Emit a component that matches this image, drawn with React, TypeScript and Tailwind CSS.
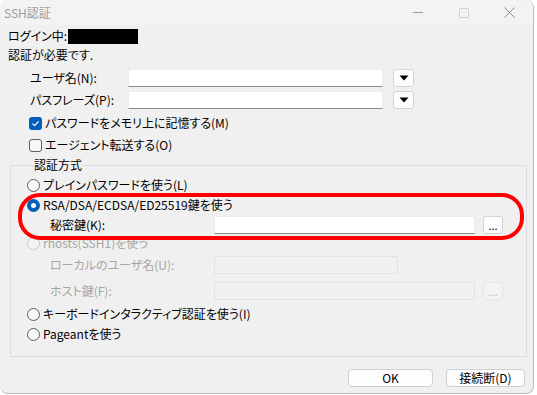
import React from 'react';

const font = "[font-family:'Noto_Sans_CJK_JP','Noto_Sans',sans-serif] [font-feature-settings:'palt']";

function Radio({ checked, disabled }: { checked?: boolean; disabled?: boolean }) {
  if (checked) {
    return (
      <span className="w-[13px] h-[13px] rounded-full bg-[#005fb8] flex items-center justify-center shrink-0">
        <span className="w-[5px] h-[5px] rounded-full bg-white" />
      </span>
    );
  }
  return (
    <span
      className={`w-[13px] h-[13px] rounded-full border shrink-0 ${disabled ? 'border-[#c8c8c8] bg-[#f3f3f3]' : 'border-[#5d5d5d] bg-[#f7f7f7]'}`}
    />
  );
}

function Checkbox({ checked }: { checked?: boolean }) {
  if (checked) {
    return (
      <span className="w-[13px] h-[13px] rounded-[3px] bg-[#005fb8] flex items-center justify-center shrink-0">
        <svg width="9" height="9" viewBox="0 0 9 9">
          <path d="M1.5 4.6 L3.6 6.7 L7.6 2.3" fill="none" stroke="white" strokeWidth="1.2" />
        </svg>
      </span>
    );
  }
  return <span className="w-[13px] h-[13px] rounded-[3px] border border-[#5d5d5d] bg-[#f7f7f7] shrink-0" />;
}

function TextBox({ w, disabled }: { w: string; disabled?: boolean }) {
  return disabled ? (
    <div className={`${w} h-[18px] border border-[#e2e2e2] bg-[#f0f0f0]`} />
  ) : (
    <div className={`${w} h-[18px] bg-white border border-[#ececec] border-b-[#8a8a8a]`} />
  );
}

function DropButton() {
  return (
    <div className="w-[21px] h-[18px] rounded-[3px] border border-[#d3d3d3] bg-[#fdfdfd] flex items-center justify-center">
      <svg width="10" height="6" viewBox="0 0 10 6">
        <path d="M0.5 0.5 H9.5 L5 5.5 Z" fill="black" />
      </svg>
    </div>
  );
}

function DotsButton({ disabled }: { disabled?: boolean }) {
  return (
    <div
      className={`w-[20px] h-[18px] rounded-[3px] border flex items-end justify-center pb-[2px] text-[11px] leading-[11px] ${disabled ? 'border-[#e6e6e6] bg-[#f3f3f3] text-[#b8b8b8]' : 'border-[#d3d3d3] bg-[#fdfdfd] text-black'}`}
    >
      ...
    </div>
  );
}

export default function App() {
  return (
    <div className={`w-[537px] h-[395px] bg-white text-[12px] text-black ${font}`}>
      <div className="relative w-[534px] h-[394px] bg-[#f0f0f0] rounded-[8px] border-r border-b border-[#6b6b6b]/40 overflow-hidden flex flex-col">
        {/* Title bar */}
        <div className="h-[25px] bg-[#f3f3f3] flex items-center shrink-0">
          <span className="pl-[4px] text-[#9b9b9b] text-[12px]">SSH認証</span>
          <div className="ml-auto flex items-center h-full">
            <div className="w-[46px] flex justify-center">
              <span className="w-[10px] h-px bg-[#9b9b9b]" />
            </div>
            <div className="w-[46px] flex justify-center">
              <span className="w-[10px] h-[10px] border border-[#d0d0d0] rounded-[2px]" />
            </div>
            <div className="w-[46px] flex justify-center pr-[2px]">
              <svg width="11" height="11" viewBox="0 0 11 11">
                <path d="M0.5 0.5 L10.5 10.5 M10.5 0.5 L0.5 10.5" stroke="#8a8a8a" strokeWidth="1" />
              </svg>
            </div>
          </div>
        </div>

        {/* Body */}
        <div className="flex flex-col pl-[8px]">
          <div className="mt-[3px] h-[16px] flex items-center">
            <span>ログイン中:</span>
            <span className="ml-[1px] w-[70px] h-[15px] bg-black" />
          </div>
          <div className="mt-[3px] h-[16px] flex items-center">認証が必要です.</div>

          <div className="mt-[6px] h-[18px] flex items-center">
            <span className="pl-[22px] w-[120px]">ユーザ名(N):</span>
            <TextBox w="w-[255px]" />
            <div className="ml-[10px]"><DropButton /></div>
          </div>
          <div className="mt-[4px] h-[18px] flex items-center">
            <span className="pl-[22px] w-[120px]">パスフレーズ(P):</span>
            <TextBox w="w-[255px]" />
            <div className="ml-[10px]"><DropButton /></div>
          </div>

          <div className="mt-[6px] h-[16px] flex items-center pl-[21px] gap-[3px]">
            <Checkbox checked />
            <span>パスワードをメモリ上に記憶する(M)</span>
          </div>
          <div className="mt-[6px] h-[16px] flex items-center pl-[21px] gap-[3px]">
            <Checkbox />
            <span>エージェント転送する(O)</span>
          </div>

          {/* Group box */}
          <fieldset className="mt-[4px] w-[517px] ml-[2px] border border-[#dcdcdc] pl-[16px] pb-[14px]">
            <legend className="ml-[7px] px-0 leading-[16px]">認証方式</legend>
            <div className="mt-[4px] h-[16px] flex items-center gap-[3px]">
              <Radio />
              <span>プレインパスワードを使う(L)</span>
            </div>
            <div className="mt-[4px] h-[16px] flex items-center gap-[3px]">
              <Radio checked />
              <span>RSA/DSA/ECDSA/ED25519鍵を使う</span>
            </div>
            <div className="mt-[3px] h-[18px] flex items-center">
              <span className="pl-[23px] w-[187px]">秘密鍵(K):</span>
              <TextBox w="w-[261px]" />
              <div className="ml-[8px]"><DotsButton /></div>
            </div>
            <div className="mt-[1px] h-[16px] flex items-center gap-[3px] text-[#a6a6a6]">
              <Radio disabled />
              <span>rhosts(SSH1)を使う</span>
            </div>
            <div className="mt-[5px] h-[18px] flex items-center text-[#a6a6a6]">
              <span className="pl-[23px] w-[187px]">ローカルのユーザ名(U):</span>
              <TextBox w="w-[184px]" disabled />
            </div>
            <div className="mt-[8px] h-[18px] flex items-center text-[#a6a6a6]">
              <span className="pl-[23px] w-[187px]">ホスト鍵(F):</span>
              <TextBox w="w-[261px]" disabled />
              <div className="ml-[8px]"><DotsButton disabled /></div>
            </div>
            <div className="mt-[6px] h-[16px] flex items-center gap-[3px]">
              <Radio />
              <span>キーボードインタラクティブ認証を使う(I)</span>
            </div>
            <div className="mt-[4px] h-[16px] flex items-center gap-[3px]">
              <Radio />
              <span>Pageantを使う</span>
            </div>
          </fieldset>

          <div className="mt-[12px] flex justify-end gap-[13px] pr-[8px]">
            <button className="w-[85px] h-[18px] rounded-[4px] border border-[#d0d0d0] bg-[#fdfdfd] leading-[16px]">OK</button>
            <button className="w-[79px] h-[18px] rounded-[4px] border border-[#d0d0d0] bg-[#fdfdfd] leading-[16px]">接続断(D)</button>
          </div>
        </div>

        {/* Red annotation */}
        <div className="absolute left-[18px] top-[193px] w-[506px] h-[47px] border-4 border-[#ff0000] rounded-[22px] pointer-events-none" />
      </div>
    </div>
  );
}
